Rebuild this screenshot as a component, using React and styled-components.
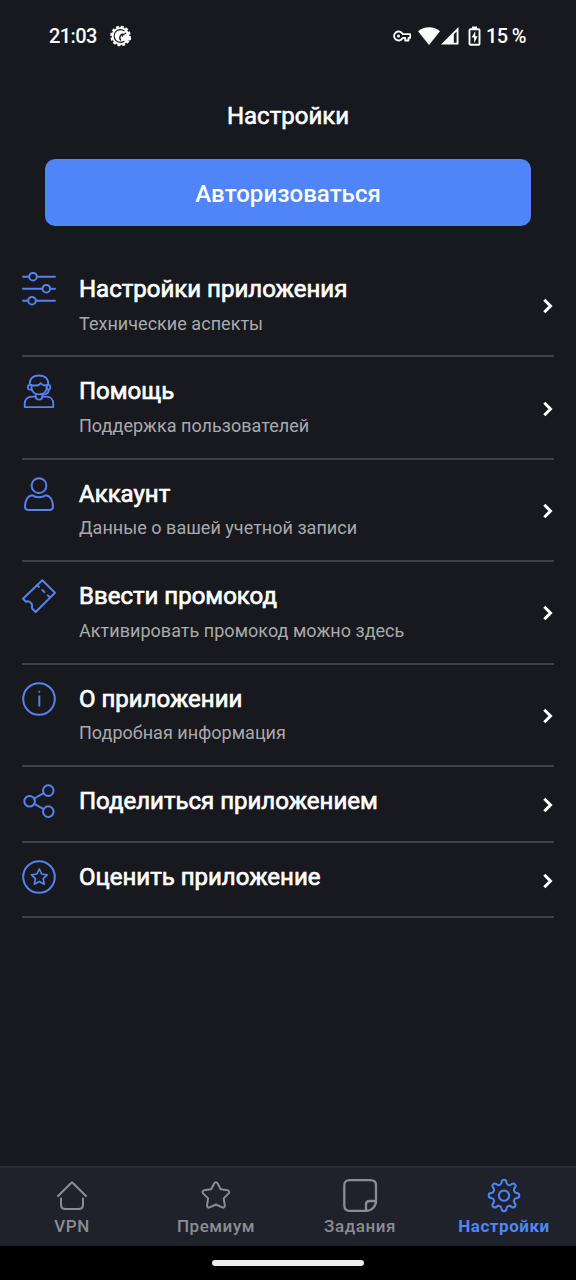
import React from "react";
import styled, { createGlobalStyle } from "styled-components";

const GlobalStyle = createGlobalStyle`
	* {
		box-sizing: border-box;
	}

	body {
		margin: 0;
		background: #18191e;
		font-family: Roboto, "Noto Sans", sans-serif;
	}
`;

const Screen = styled.div`
	width: 576px;
	height: 1280px;
	display: flex;
	flex-direction: column;
	background: #18191e;
	color: #fff;
	overflow: hidden;
`;

const StatusBar = styled.header`
	height: 72px;
	padding: 0 50px 0 49px;
	display: flex;
	align-items: center;
	justify-content: space-between;
`;

const StatusGroup = styled.div`
	display: flex;
	align-items: center;
`;

const StatusText = styled.span`
	margin-left: ${(props) => props.$gap || 0}px;
	font-size: 20px;
	font-weight: 500;
	line-height: 24px;
	letter-spacing: -0.6px;
	white-space: nowrap;
`;

const StatusIcon = styled.svg`
	display: block;
	flex: none;
	margin-left: ${(props) => props.$gap || 0}px;
`;

const Title = styled.h1`
	margin: 28px 0 0;
	font-size: 24px;
	font-weight: 400;
	line-height: 32px;
	text-align: center;
	-webkit-text-stroke: 0.6px #fff;
`;

const LoginButton = styled.button`
	height: 67px;
	margin: 27.4px 45px 0;
	padding: 2px 0 0;
	border: 0;
	border-radius: 10px;
	background: #5085fa;
	color: #fff;
	font-family: inherit;
	font-size: 24px;
	font-weight: 500;
	letter-spacing: 0.05px;
`;

const Menu = styled.ul`
	flex: 1;
	margin: 28.7px 22px 0;
	padding: 0;
	list-style: none;
`;

const MenuItem = styled.li`
	height: ${(props) => (props.$short ? 75.7 : 102.4)}px;
	display: flex;
	align-items: center;
	border-bottom: 2px solid #3f4044;
`;

const MenuIcon = styled.svg`
	display: block;
	flex: none;
	align-self: flex-start;
	margin-top: 16.9px;
	fill: none;
	stroke: #5482f0;
	stroke-width: 2;
	stroke-linecap: round;
	stroke-linejoin: round;
`;

const MenuText = styled.div`
	flex: 1;
	align-self: flex-start;
	margin: 18px 0 0 23px;
`;

const MenuTitle = styled.div`
	font-size: 24px;
	line-height: 32px;
	white-space: nowrap;
	-webkit-text-stroke: 0.7px #fff;
`;

const MenuNote = styled.div`
	margin-top: 6.6px;
	color: #a9aaad;
	font-size: 18px;
	line-height: 24px;
	letter-spacing: 0.03px;
	white-space: nowrap;
`;

const Chevron = styled.svg`
	display: block;
	flex: none;
	margin-top: 2px;
`;

const TabBar = styled.nav`
	height: 80px;
	display: grid;
	grid-template-columns: repeat(4, 1fr);
	background: #1f222b;
	border-top: 2px solid #2a2c33;
`;

const Tab = styled.div`
	display: flex;
	flex-direction: column;
	align-items: center;
	padding-top: 11px;
	color: ${(props) => (props.$active ? "#5085fa" : "#8b8d93")};

	svg {
		display: block;
		fill: none;
		stroke: currentColor;
		stroke-width: 2;
		stroke-linecap: round;
		stroke-linejoin: round;
	}
`;

const TabLabel = styled.span`
	margin-top: 3px;
	font-size: 17px;
	font-weight: ${(props) => (props.$active ? 700 : 500)};
	line-height: 20px;
	letter-spacing: 0.55px;
`;

const GestureBar = styled.footer`
	height: 34px;
	display: flex;
	justify-content: center;
	padding-top: 14px;
	background: #000;
`;

const GestureHandle = styled.div`
	width: 152px;
	height: 6px;
	border-radius: 3px;
	background: #ececec;
`;

const icons = {
	sliders: (
		<>
			<path d="M1 4.7h5.6M15.4 4.7H33M1 16.7h18.9M28.6 16.7H33M1 28.7h4.6M14.4 28.7H33" />
			<circle cx="11" cy="4.7" r="3.8" />
			<circle cx="24.3" cy="16.7" r="3.8" />
			<circle cx="10" cy="28.7" r="3.8" />
		</>
	),
	support: (
		<g strokeWidth="1.8">
			<path d="M7.8 10.8C7.2 4.800 11 1.500 17 1.500s9.800 3.300 9.200 9.300" />
			<path d="M9.600 11.500h5c2 0 3.200-.8 4-2.300 1.200 1.500 3 2.300 6 2.300" />
			<path d="M9.400 10.900H8.200a2.300 2.300 0 0 0 0 4.800h1.400M24.700 10.900h1.300a2.400 2.400 0 0 1 0 4.800h-1.300z" />
			<path d="M9.500 11v2.800c0 4 3.600 6.600 7.600 6.600s7.600-2.600 7.600-6.600V11" />
			<path d="M26.700 16c0 3-1.500 4.300-5 4.300h-3.200" />
			<path d="M13.700 20.200v2.300c0 4.200 6.700 4.200 6.700 0v-2.300" />
			<path d="M13.500 22.700H9.700c-4.300 0-7 3-7 7.200v3.200h28.600v-3.200c0-4.200-2.700-7.200-7-7.200h-3.700" />
		</g>
	),
	account: (
		<>
			<circle cx="17" cy="8.6" r="7.4" />
			<path d="M10.300 18.200c3.500 2.700 9.900 2.700 13.400 0 4.800.7 7.300 5.500 7.300 11.300 0 2.400-1.500 3.500-3.800 3.500H6.800C4.500 33 3 31.900 3 29.500c0-5.800 2.500-10.600 7.300-11.300z" />
		</>
	),
	ticket: (
		<>
			<path d="M20.300 1.200 1 19.800l3 3c3.400-1.700 7.200 2 5.800 5.600L10.500 30l3.200 3L33 13.800z" />
			<path d="m15.300 6.200 1.700 1.700M20.300 11l2.200 2.100M25.800 16.400l1.700 1.700" />
		</>
	),
	info: (
		<>
			<circle cx="17" cy="17" r="15.8" />
			<path d="M17.300 13.500v11" strokeLinecap="butt" />
			<path d="M17.300 9.700v.1" />
		</>
	),
	share: (
		<>
			<circle cx="7.6" cy="17.2" r="5.3" />
			<circle cx="26.3" cy="6.6" r="5.3" />
			<circle cx="26.3" cy="27.6" r="5.3" />
			<path d="m12.300 14.500 9.300-5.300M12.300 19.900l9.300 5.200" />
		</>
	),
	rate: (
		<>
			<circle cx="17" cy="17" r="15.8" />
			<path
				strokeWidth="1.7"
				d="m17.300 9 2.400 5 5.500.8-4 3.800 1 5.600-4.900-2.800-4.900 2.800 1-5.600-4-3.800 5.500-.8z"
			/>
		</>
	),
};

const items = [
	{ icon: "sliders", title: "Настройки приложения", note: "Технические аспекты" },
	{ icon: "support", title: "Помощь", note: "Поддержка пользователей" },
	{ icon: "account", title: "Аккаунт", note: "Данные о вашей учетной записи" },
	{ icon: "ticket", title: "Ввести промокод", note: "Активировать промокод можно здесь" },
	{ icon: "info", title: "О приложении", note: "Подробная информация" },
	{ icon: "share", title: "Поделиться приложением" },
	{ icon: "rate", title: "Оценить приложение" },
];

const tabs = [
	{
		label: "VPN",
		icon: <path d="M4 17 18 3.200 32 17M7 19.500v6c0 3 1.500 4.500 4.500 4.500h13c3 0 4.500-1.500 4.500-4.500v-6" />,
	},
	{
		label: "Премиум",
		icon: (
			<path d="M16.300 4.200c.7-1.400 2.500-1.400 3.200 0l3.200 6 6.900 1c1.600.3 2.200 2 1.100 3.200l-5 5 1.100 7.100c.3 1.500-1.200 2.600-2.600 1.900L18 25.500l-6.400 2.900c-1.400.7-2.900-.4-2.600-1.900l1.100-7.100-5-5c-1.100-1.200-.5-2.900 1.100-3.200l6.900-1z" />
		),
	},
	{
		label: "Задания",
		icon: (
			<path
				strokeWidth="2.3"
				d="M34 18V6.500C34 2.900 32 1.200 28.500 1.200h-21C4 1.200 2.300 2.900 2.300 6.400v20.100c0 3.500 1.700 5.300 5.200 5.300H24c5.500 0 10-4.300 10-9.800v-4M24 31.500v-6c0-2.300 1-3.500 3.500-3.500H34"
			/>
		),
	},
	{
		label: "Настройки",
		active: true,
		icon: (
			<>
				<circle cx="18" cy="16.6" r="5.2" />
				<path d="M15.600 3.200a2.400 2.400 0 0 1 4.800 0c0 2.600 3.100 3.900 5 2.100a2.400 2.400 0 0 1 3.400 3.400c-1.800 1.900-.5 5.400 2.100 5.400a2.400 2.400 0 0 1 0 4.800c-2.600 0-3.900 3.500-2.100 5.400a2.400 2.400 0 0 1-3.400 3.400c-1.900-1.800-5-.5-5 2.100a2.400 2.400 0 0 1-4.800 0c0-2.600-3.100-3.900-5-2.100a2.400 2.400 0 0 1-3.400-3.400c1.800-1.900.5-5.400-2.100-5.400a2.400 2.400 0 0 1 0-4.800c2.600 0 3.900-3.500 2.100-5.400a2.400 2.400 0 0 1 3.400-3.400c1.900 1.800 5 .5 5-2.100z" />
			</>
		),
	},
];

const Status = () => (
	<StatusBar>
		<StatusGroup>
			<StatusText>21:03</StatusText>
			<StatusIcon $gap={13} width="22" height="22" viewBox="0 0 22 22">
				<circle cx="10.5" cy="11" r="8.9" fill="#fff" />
				<circle cx="10.5" cy="11" r="9.4" fill="none" stroke="#fff" strokeWidth="1.800" strokeDasharray="3 1.920" />
				<path d="M14.500 6a6.400 6.400 0 1 0 0 10" fill="none" stroke="#18191e" strokeWidth="1.100" />
				<path d="M11 15.500C8.600 13 10 9.300 13.500 9M12 11.500l4-3.500" fill="none" stroke="#18191e" strokeWidth="1.500" />
				<path d="M13 15.600c-2.600 0-2.800-3.600-.2-3.900C14 8 19 8.300 19.300 11.400c2.700.4 2.400 4.200-.2 4.200z" fill="#fff" />
			</StatusIcon>
		</StatusGroup>
		<StatusGroup>
			<StatusIcon width="18" height="12" viewBox="0 0 18 12">
				<path
					d="M9.700 4.200h7.500v3.600h-1.700v2.700h-3.300V7.800H9.700A4.500 4.500 0 1 1 9.700 4.200z"
					fill="none"
					stroke="#fff"
					strokeWidth="1.8"
					strokeLinejoin="round"
				/>
				<circle cx="5.5" cy="6" r="1.500" fill="#fff" />
			</StatusIcon>
			<StatusIcon $gap={7} width="22" height="18" viewBox="0 0 22 18">
				<path d="M0 4.300C6-1.200 16-1.200 22 4.300L11 18z" fill="#fff" />
			</StatusIcon>
			<StatusIcon $gap={1} width="18" height="18" viewBox="0 0 18 18">
				<path d="M0 17.500 17.500 0v17.500z" fill="#fff" />
				<path d="M12.800 7.200 15.600 4.500v11.200h-2.800z" fill="#18191e" />
			</StatusIcon>
			<StatusIcon $gap={8.5} width="13" height="20" viewBox="0 0 13 20">
				<path d="M4 .5h5v2.500H4z" fill="#fff" />
				<rect x="1.5" y="3.2" width="10" height="15.500" rx="1" fill="none" stroke="#fff" strokeWidth="1.9" />
				<path d="M7.300 5 3.600 11.500h2.500V17l3.600-6.800H7.300z" fill="#fff" />
			</StatusIcon>
			<StatusText $gap={5}>15 %</StatusText>
		</StatusGroup>
	</StatusBar>
);

const MenuRow = ({ icon, title, note }) => (
	<MenuItem $short={!note}>
		<MenuIcon width="34" height="34" viewBox="0 0 34 34">
			{icons[icon]}
		</MenuIcon>
		<MenuText>
			<MenuTitle>{title}</MenuTitle>
			{note && <MenuNote>{note}</MenuNote>}
		</MenuText>
		<Chevron width="12" height="16" viewBox="0 0 12 16">
			<path d="m2.300 1.700 6.200 6.300-6.200 6.300" fill="none" stroke="#fff" strokeWidth="3" />
		</Chevron>
	</MenuItem>
);

export default function App() {
	return (
		<>
			<GlobalStyle />
			<Screen>
				<Status />
				<Title>Настройки</Title>
				<LoginButton>Авторизоваться</LoginButton>
				<Menu>
					{items.map((item) => (
						<MenuRow key={item.icon} {...item} />
					))}
				</Menu>
				<TabBar>
					{tabs.map(({ label, icon, active }) => (
						<Tab key={label} $active={active}>
							<svg width="36" height="34" viewBox="0 0 36 34">
								{icon}
							</svg>
							<TabLabel $active={active}>{label}</TabLabel>
						</Tab>
					))}
				</TabBar>
				<GestureBar>
					<GestureHandle />
				</GestureBar>
			</Screen>
		</>
	);
}
